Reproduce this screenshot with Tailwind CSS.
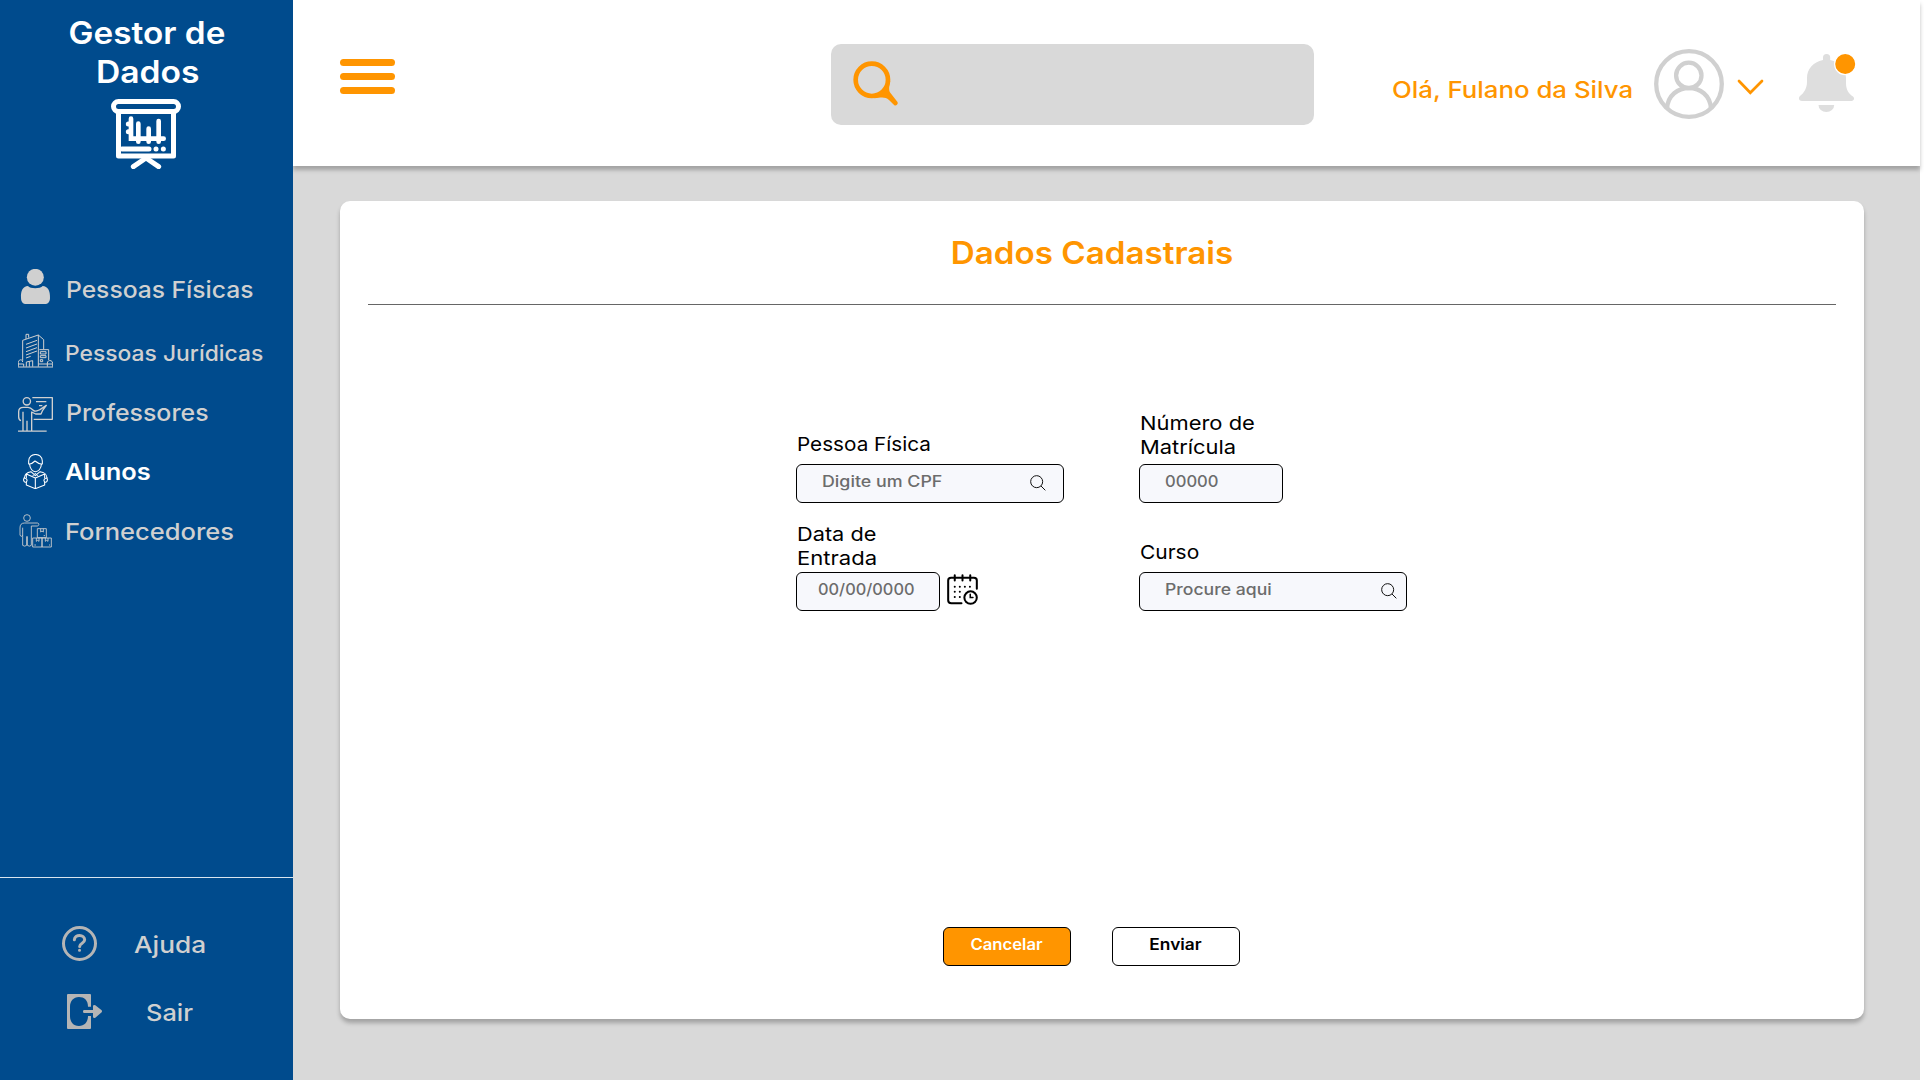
<!DOCTYPE html>
<html lang="pt-BR">
<head>
<meta charset="utf-8">
<title>Gestor de Dados</title>
<script src="https://cdn.jsdelivr.net/npm/@tailwindcss/browser@4"></script>
</head>
<body class="bg-white font-['Inter',sans-serif] font-medium">
<div class="flex h-[1080px] w-[1920px] bg-[#d9d9d9]">

  <!-- Sidebar -->
  <aside class="z-10 flex w-[293px] shrink-0 flex-col bg-[#004b8d] text-[#d0d0d0]">
    <h1 class="flex flex-col items-center pt-[13px] text-[31px] leading-[39px] font-semibold text-white">
      <span class="scale-x-[1.075]">Gestor de</span>
      <span class="ml-0.5 scale-x-[1.085]">Dados</span>
    </h1>
    <svg class="mt-2 ml-[111px] size-[70px] shrink-0" viewBox="333 297 210 210" fill="none" stroke="#fff" stroke-width="15" stroke-linecap="round">
      <rect x="340.5" y="304.5" width="195" height="30" rx="15"/>
      <path stroke-linecap="butt" stroke-linejoin="round" d="M355.5 335V468H520.5V335"/>
      <path d="M438 474L400 500M438 474L476 500"/>
      <path stroke-width="14" d="M393 356V416H491M415 371V425M446 386V425M476 363V425"/>
      <path stroke-width="15" d="M385 372h2M385 395h2M366 447H447M468 447h.1M490 447h.1"/>
    </svg>

    <nav class="mt-[100px] flex flex-col text-[23px] leading-6">
      <a class="flex h-[35px] items-center gap-[13px] pl-[18px]">
        <svg class="size-[35px]" viewBox="54 42 105 105" fill="currentColor"><circle cx="106" cy="67" r="25.5"/><path d="M84 93C90 102 121 102 128 93C143 93 151 108 150 128C150 140 144 147 134 147H79C69 147 63 140 63 128C62 108 69 93 84 93Z"/></svg>
        <span class="mt-1.5 origin-left scale-x-[1.071]">Pessoas Físicas</span>
      </a>
      <a class="mt-[29px] flex h-[35px] items-center gap-3 pl-[18px]">
        <svg class="size-[35px]" viewBox="54 234 105 105" fill="none" stroke="currentColor" stroke-width="3">
          <path d="M68 317V256L115 240V335M115 240L131 254V283M78 252V238H86V248"/>
          <path d="M78 268L111 256M78 279L111 267M78 290L111 278M78 300L111 288M78 309L92 304"/>
          <path d="M118 284H146V315M121 290H138V297H121ZM121 302H138V308H121ZM121 314H128V320H121Z"/>
          <path d="M54 336H159M55 335V323C55 312 68 312 68 321M79 335V321L98 317V335M88 335V319M142 335V324C142 314 158 314 158 325V335M54 327H71V335M115 327H158"/>
        </svg>
        <span class="mt-1 origin-left scale-x-[1.078] text-[21.2px]">Pessoas Jurídicas</span>
      </a>
      <a class="mt-[29px] flex h-[35px] items-center gap-[13px] pl-[18px]">
        <svg class="size-[35px]" viewBox="54 36 105 105" fill="none" stroke="currentColor" stroke-width="4" stroke-linejoin="round">
          <circle cx="80.5" cy="49" r="11"/>
          <path d="M97 38H157V103H101M108 50H139M117 62H127"/>
          <path d="M63 107C57 105 56 101 56 95V80C56 71 62 67 70 67H84C92 67 97 73 101 77C108 81 114 76 120 74L139 61L128 76L123 87H107L95 81V137M69 80V137M81 107V137M54 138.5H140"/>
        </svg>
        <span class="-mt-1 origin-left scale-x-[1.082]">Professores</span>
      </a>
      <a class="mt-[22px] flex h-[35px] items-center gap-3 pl-[18px] text-white">
        <svg class="size-[35px]" viewBox="54 207 105 105" fill="none" stroke="currentColor" stroke-width="3.2" stroke-linejoin="round">
          <path d="M86 238V228C86 202 127 202 127 228V238M86 238C95 237 100 233 105 228C111 233 119 237 127 238M89 238C89 252 99 260 106 260C114 260 124 252 124 238"/>
          <path d="M93 260L106 272L120 260M98 272L106 266L114 272M93 260C80 262 74 266 73 279M120 260C134 262 140 266 141 279"/>
          <path d="M79 280V267L106 279L134 267V280M79 291V300L106 311L134 300V291M106 279V311"/>
          <path d="M72 279C68 288 74 293 79 291C84 286 80 279 72 279ZM141 279C145 288 139 293 134 291C129 286 133 279 141 279Z"/>
        </svg>
        <span class="origin-left scale-x-[1.105] font-semibold">Alunos</span>
      </a>
      <a class="mt-6 flex h-[35px] items-center gap-3 pl-[18px]">
        <svg class="size-[35px]" viewBox="54 383 105 105" fill="none" stroke="currentColor" stroke-width="2.6" stroke-linejoin="round">
          <circle cx="81" cy="398" r="10"/>
          <path d="M68 427V480Q74 485 80 480V453M82 453V480Q88 485 94 480V422H112C118 421 118 413 112 413H74C64 413 60 418 60 428V450Q64 456 68 450"/>
          <path d="M112 430H139V457H112ZM98 458H126V485H98ZM126 458H154V485H126Z"/>
          <path d="M122 430V440L126 437L130 440V430M109 458V468L113 465L117 468V458M136 458V468L140 465L144 468V458"/>
          <path d="M131 451H135M103 479H108M147 479H150"/>
        </svg>
        <span class="mt-0.5 origin-left scale-x-[1.109]">Fornecedores</span>
      </a>
    </nav>

    <div class="mt-[329px] border-t border-[#d9e4ee] pt-12 text-[23px] leading-6">
      <a class="flex h-[35px] items-center gap-[37px] pl-[62px]">
        <svg class="size-[35px]" viewBox="186 197.5 105 105" fill="none" stroke="#b5b5b5" stroke-width="9" stroke-linecap="round"><circle cx="238.5" cy="250" r="48"/><path d="M223 239C224 221 254 222 254 239C254 250 239 248 239 259M238.500 270h.1"/></svg>
        <span class="mt-0.5 origin-left scale-x-[1.142]">Ajuda</span>
      </a>
      <a class="mt-[33px] flex h-[35px] items-center gap-11 pl-[67px]">
        <svg class="size-[35px]" viewBox="201 402 105 105" fill="#b5b5b5"><path d="M204 402H270q3 0 3 3V440H264C264 420 252 411 237 411C220 411 210 424 210 440V468C210 486 220 498 237 498C252 498 264 488 264 468H273V504q0 3-3 3H204q-3 0-3-3V405q0-3 3-3Z"/><path d="M251 450H279V438Q280 434 286 436L305 451Q307 454 305 457L286 473Q280 475 279 471V459H251Q247 454 251 450Z"/></svg>
        <span class="mt-0.5 origin-left scale-x-[1.103]">Sair</span>
      </a>
    </div>
  </aside>

  <div class="flex flex-1 flex-col">
    <!-- Top bar -->
    <header class="flex h-[166px] shrink-0 items-start bg-white pl-[47px] shadow-[0_4px_4px_rgba(0,0,0,0.25)]">
      <div class="mt-[59px] flex w-[55px] flex-col gap-[7px]">
        <i class="h-[7px] rounded-full bg-[#ff9500]"></i>
        <i class="h-[7px] rounded-full bg-[#ff9500]"></i>
        <i class="h-[7px] rounded-full bg-[#ff9500]"></i>
      </div>
      <div class="mt-11 ml-[436px] h-[81px] w-[483px] rounded-[10px] bg-[#d9d9d9] pt-[17px] pl-[22px]">
        <svg class="size-[45px]" viewBox="99 93 135 135"><circle cx="155.500" cy="149.500" r="48.500" fill="none" stroke="#ff9500" stroke-width="14"/><path fill="#ff9500" d="M211 152C207 170 205 182 212 190L232 215A7.500 7.500 0 0 1 223 226L207 210C196 199 182 202 163 205L190 180Z"/></svg>
      </div>
      <span class="mt-[78px] ml-[78px] w-[242px] origin-left scale-x-[1.122] text-[23px] leading-6 whitespace-nowrap text-[#ff9500]">Olá, Fulano da Silva</span>
      <svg class="mt-[49px] ml-5 size-[70px]" viewBox="0 0 70 70" fill="none" stroke="#d0d0d0" stroke-width="4.300"><circle cx="35" cy="35" r="32.800"/><circle cx="34.800" cy="26.400" r="12.700"/><path d="M13 60C14 32 56 32 57 60"/></svg>
      <svg class="mt-[78px] ml-[13px] h-[18px] w-7" viewBox="0 0 28 18" fill="none" stroke="#ff9500" stroke-width="2.700" stroke-linecap="round"><path d="M2 3L13.300 14.800L25 3"/></svg>
      <svg class="mt-[54px] ml-[34px] h-[58px] w-14 overflow-visible" viewBox="0 0 56 58"><path fill="#dedede" d="M24 3.500a3.600 3.500 0 0 1 7.200 0V6C41 8 47 15 47 24V29C47 36 50 40 54 42.500C56 44.500 55 47 52 47H3C0 47-1 44 1 42C5 39 8 34 8 28V24C8 15 14 8 24 6ZM19.500 51h15.700a7.800 7 0 0 1-15.700 0Z"/><circle cx="46.200" cy="10" r="10.600" fill="#ff9500" stroke="#fff" stroke-width="1.200"/></svg>
    </header>

    <!-- Form card -->
    <main class="mt-[35px] ml-[47px] h-[818px] w-[1524px] rounded-[10px] bg-white pt-8 shadow-[0_4px_4px_rgba(0,0,0,0.25)]">
      <h2 class="flex justify-center pr-5 text-[31px] leading-10 font-semibold text-[#ff9500]"><span class="scale-x-[1.07]">Dados Cadastrais</span></h2>
      <hr class="mx-7 mt-[31px] border-t border-[#666]">

      <form class="mt-[106px] grid grid-cols-[343px_1fr] items-end gap-y-[19px] pl-[456px] text-[15.5px] text-[#6c6c6c]">
        <div>
          <label class="mb-2 ml-px block w-fit origin-left scale-x-[1.074] text-[19.3px] leading-6 font-normal text-black">Pessoa Física</label>
          <div class="flex h-[39px] w-[268px] items-center justify-between rounded-md border border-black bg-[#f7f8fc] pr-[17px] pb-1 pl-[25px]">
            <span class="origin-left scale-x-[1.15]">Digite um CPF</span>
            <svg class="mt-[3px] size-4" viewBox="749 227 48 48" fill="none" stroke="#111" stroke-width="3"><path d="M782 260L795 273"/><circle cx="769" cy="247" r="18"/></svg>
          </div>
        </div>
        <div>
          <label class="mb-[5px] ml-px flex w-fit flex-col items-start text-[19.3px] leading-6 font-normal text-black"><span class="origin-left scale-x-[1.137]">Número de</span><span class="origin-left scale-x-[1.134]">Matrícula</span></label>
          <div class="flex h-[39px] w-36 items-center rounded-md border border-black bg-[#f7f8fc] pb-1 pl-[25px]">
            <span class="origin-left scale-x-[1.07]">00000</span>
          </div>
        </div>
        <div>
          <label class="mb-0.5 ml-px flex w-fit flex-col items-start text-[19.3px] leading-6 font-normal text-black"><span class="origin-left scale-x-[1.127]">Data de</span><span class="origin-left scale-x-[1.144]">Entrada</span></label>
          <div class="flex gap-[6.5px]">
            <div class="flex h-[39px] w-36 items-center rounded-md border border-black bg-[#f7f8fc] pb-1 pl-[21px]">
              <span class="origin-left scale-x-[1.055]">00/00/0000</span>
            </div>
            <svg class="mt-0.5 size-[31px]" viewBox="500 524 92 92" fill="none" stroke="#000" stroke-width="6" stroke-linecap="round">
              <path d="M588.500 568V543Q588.500 535 580 535H512Q503.500 535 503.500 543V602Q503.500 611 513 611H543M523 528V543M546 528V543M569 528V543"/>
              <path d="M523 562h.1M538 562h.1M553 562h.1M568 562h.1M523 577h.1M538 577h.1M523 592h.1M538 592h.1"/>
              <circle cx="570" cy="594" r="18.500"/><path stroke-width="4.500" d="M569 584V594H577"/>
            </svg>
          </div>
        </div>
        <div>
          <label class="mb-2 ml-px block w-fit origin-left scale-x-[1.087] text-[19.3px] leading-6 font-normal text-black">Curso</label>
          <div class="flex h-[39px] w-[268px] items-center justify-between rounded-md border border-black bg-[#f7f8fc] pr-[9px] pb-1 pl-[25px]">
            <span class="origin-left scale-x-[1.137]">Procure aqui</span>
            <svg class="mt-[3px] size-4" viewBox="749 227 48 48" fill="none" stroke="#111" stroke-width="3"><path d="M782 260L795 273"/><circle cx="769" cy="247" r="18"/></svg>
          </div>
        </div>
      </form>

      <div class="mt-[316px] ml-[603px] flex gap-[41px] text-[15.5px] font-semibold">
        <button class="h-[39px] w-32 rounded-md border border-black bg-[#ff9500] pr-px pb-1 text-white"><span class="block scale-x-[1.075]">Cancelar</span></button>
        <button class="h-[39px] w-32 rounded-md border border-black bg-white pr-px pb-1 text-black"><span class="block scale-x-[1.117]">Enviar</span></button>
      </div>
    </main>
  </div>
</div>
</body>
</html>
